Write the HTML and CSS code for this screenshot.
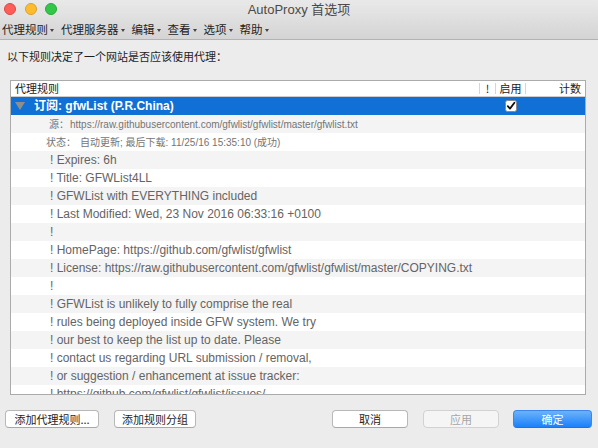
FILE: index.html
```html
<!DOCTYPE html>
<html lang="zh-CN">
<head>
<meta charset="utf-8">
<title>AutoProxy 首选项</title>
<link rel="stylesheet" href="styles.css">
</head>
<body>
<div class="window">
  <header class="titlebar">
    <div class="titlerow">
      <div class="lights">
        <span class="light red"></span>
        <span class="light yellow"></span>
        <span class="light green"></span>
      </div>
      <div class="title">AutoProxy 首选项</div>
      <div></div>
    </div>
    <nav class="menubar">
      <span class="menu">代理规则<i class="caret"></i></span>
      <span class="menu">代理服务器<i class="caret"></i></span>
      <span class="menu">编辑<i class="caret"></i></span>
      <span class="menu">查看<i class="caret"></i></span>
      <span class="menu">选项<i class="caret"></i></span>
      <span class="menu">帮助<i class="caret"></i></span>
    </nav>
  </header>

  <main class="content">
    <p class="intro">以下规则决定了一个网站是否应该使用代理：</p>
    <div class="tree">
      <div class="thead">
        <div class="th th-name">代理规则</div>
        <div class="th sep th-center"><span>!</span></div>
        <div class="th sep th-center"><span>启用</span></div>
        <div class="th sep th-right"><span>计数</span></div>
      </div>
      <div class="tbody">
        <div class="row selected">
          <div class="cell-name"><i class="twisty"></i><span class="group-name">订阅: gfwList (P.R.China)</span></div>
          <div></div>
          <div class="cell-check">
            <svg class="checkbox" width="12" height="12" viewBox="0 0 12 12"><rect x="0.5" y="0.5" width="11" height="11" rx="2" fill="#fff" stroke="#8a8a8a"/><path d="M2.8 6.2 L5 8.6 L9.4 2.8" fill="none" stroke="#111" stroke-width="1.8" stroke-linecap="round" stroke-linejoin="round"/></svg>
          </div>
          <div></div>
        </div>
        <div class="row info info-src"><span class="info-label">源：</span>https://raw.githubusercontent.com/gfwlist/gfwlist/master/gfwlist.txt</div>
        <div class="row info info-status"><span class="info-label">状态：</span>自动更新; 最后下载: 11/25/16 15:35:10 (成功)</div>
        <div class="row rule">! Expires: 6h</div>
        <div class="row rule">! Title: GFWList4LL</div>
        <div class="row rule">! GFWList with EVERYTHING included</div>
        <div class="row rule">! Last Modified: Wed, 23 Nov 2016 06:33:16 +0100</div>
        <div class="row rule">!</div>
        <div class="row rule">! HomePage: https://github.com/gfwlist/gfwlist</div>
        <div class="row rule">! License: https://raw.githubusercontent.com/gfwlist/gfwlist/master/COPYING.txt</div>
        <div class="row rule">!</div>
        <div class="row rule">! GFWList is unlikely to fully comprise the real</div>
        <div class="row rule">! rules being deployed inside GFW system. We try</div>
        <div class="row rule">! our best to keep the list up to date. Please</div>
        <div class="row rule">! contact us regarding URL submission / removal,</div>
        <div class="row rule">! or suggestion / enhancement at issue tracker:</div>
        <div class="row rule">! https://github.com/gfwlist/gfwlist/issues/.</div>
      </div>
    </div>
  </main>

  <footer class="buttons">
    <div class="btn-group-left">
      <button class="btn btn-add">添加代理规则...</button>
      <button class="btn btn-addgroup">添加规则分组</button>
    </div>
    <div class="btn-group-right">
      <button class="btn btn-cancel">取消</button>
      <button class="btn btn-apply" disabled>应用</button>
      <button class="btn btn-ok">确定</button>
    </div>
  </footer>
</div>
</body>
</html>
```

FILE: styles.css
```css
html, body {
  margin: 0;
  padding: 0;
}
body {
  width: 598px;
  height: 448px;
  overflow: hidden;
  background: #ececec;
  font-family: "Liberation Sans", "Noto Sans CJK SC", sans-serif;
  color: #222;
}
.window {
  width: 598px;
  height: 448px;
  display: flex;
  flex-direction: column;
  background: #ececec;
}

/* Title bar */
.titlebar {
  height: 39px;
  border-bottom: 1px solid #b3b3b3;
  background: linear-gradient(#e9e9e9, #d4d4d4);
  display: flex;
  flex-direction: column;
}
.titlerow {
  height: 20px;
  display: grid;
  grid-template-columns: 1fr auto 1fr;
  align-items: start;
}
.lights {
  display: flex;
  gap: 8.5px;
  padding: 3px 0 0 4px;
}
.light {
  width: 12px;
  height: 12px;
  border-radius: 50%;
  box-sizing: border-box;
}
.red { background: #fc5f57; border: 0.5px solid #df4744; }
.yellow { background: #fdbc2e; border: 0.5px solid #de9f34; }
.green { background: #33c748; border: 0.5px solid #27aa35; }
.title {
  font-size: 13px;
  line-height: 20px;
  color: #4a4a4a;
  font-family: "Liberation Sans", "Noto Sans CJK SC", sans-serif;
}
.menubar {
  height: 19px;
  display: flex;
  gap: 7px;
  padding-left: 2px;
  align-items: center;
}
.menu {
  font-family: "Noto Sans CJK SC", sans-serif;
  font-size: 11.5px;
  line-height: 19px;
  color: #1e1e1e;
  display: flex;
  align-items: center;
}
.caret {
  display: block;
  width: 0;
  height: 0;
  margin-left: 2px;
  margin-top: 1px;
  border-left: 2px solid transparent;
  border-right: 2px solid transparent;
  border-top: 3px solid #444;
}

/* Content */
.content {
  display: flex;
  flex-direction: column;
}
.intro {
  margin: 0;
  padding: 9px 0 0 7px;
  font-family: "Noto Sans CJK SC", sans-serif;
  font-size: 11px;
  line-height: 14px;
  color: #1e1e1e;
}
.tree {
  margin: 17px 0 0 10px;
  width: 576px;
  height: 315px;
  box-sizing: border-box;
  border: 1px solid #ababab;
  background: #fff;
  overflow: hidden;
}
.thead {
  display: grid;
  grid-template-columns: 468px 16px 30px 60px;
  height: 15px;
  border-bottom: 1px solid #cdcdcd;
  font-family: "Noto Sans CJK SC", sans-serif;
  font-size: 11px;
  color: #222;
}
.th {
  display: flex;
  align-items: center;
  line-height: 15px;
}
.th-name {
  padding-left: 4px;
}
.th.sep::before {
  content: "";
  width: 1px;
  height: 11px;
  background: #d6d6d6;
  flex: none;
}
.th-center span {
  flex: 1;
  text-align: center;
}
.th-right span {
  flex: 1;
  text-align: right;
  padding-right: 4px;
}

.tbody {
  display: flex;
  flex-direction: column;
}
.row {
  height: 18px;
  flex: none;
  line-height: 18px;
  white-space: nowrap;
  overflow: hidden;
}
.row:nth-child(even) {
  background: #f4f4f4;
}
.row.selected {
  background: #1170d6;
  display: grid;
  grid-template-columns: 468px 16px 30px 60px;
  align-items: center;
}
.cell-name {
  display: flex;
  align-items: center;
  padding-left: 4px;
}
.twisty {
  display: block;
  width: 0;
  height: 0;
  border-left: 5px solid transparent;
  border-right: 5px solid transparent;
  border-top: 8px solid #8e8e8e;
  margin-right: 9px;
}
.group-name {
  color: #fff;
  font-weight: bold;
  font-size: 12px;
  font-family: "Liberation Sans", "Noto Sans CJK SC", sans-serif;
}
.cell-check {
  display: flex;
  justify-content: center;
  align-items: center;
  padding-left: 2px;
}
.checkbox {
  display: block;
}

.info {
  font-size: 10px;
  color: #747474;
  font-family: "Liberation Sans", "Noto Sans CJK SC", sans-serif;
}
.info-src {
  padding-left: 38px;
}
.info-status {
  padding-left: 35px;
}
.info-label {
  font-family: "Noto Sans CJK SC", sans-serif;
}
.info-status .info-label {
  margin-right: 4px;
}
.info-src .info-label {
  margin-right: 1px;
}
.rule {
  padding-left: 39px;
  font-size: 12px;
  color: #646464;
}

/* Buttons */
.buttons {
  margin-top: 15px;
  display: flex;
  justify-content: space-between;
  padding: 0 6px 0 5px;
}
.btn-group-left,
.btn-group-right {
  display: flex;
  gap: 15px;
}
.btn-group-right .btn-ok {
  margin-left: -1px;
}
.btn {
  height: 18px;
  box-sizing: border-box;
  padding: 0;
  border: 1px solid #b8b8b8;
  border-bottom-color: #a8a8a8;
  border-radius: 4px;
  background: #fff;
  font-family: "Noto Sans CJK SC", sans-serif;
  font-size: 11px;
  line-height: 16px;
  color: #1e1e1e;
  text-align: center;
}
.btn-add { width: 94px; }
.btn-addgroup { width: 82px; }
.btn-cancel { width: 76px; }
.btn-apply {
  width: 76px;
  background: #f5f5f5;
  border-color: #d2d2d2;
  color: #a6a6a6;
}
.btn-ok {
  width: 79px;
  border-color: #3b86ee;
  border-bottom-color: #2a6fd8;
  background: linear-gradient(#6cb3fa, #1b80fa);
  color: #fff;
}
```
